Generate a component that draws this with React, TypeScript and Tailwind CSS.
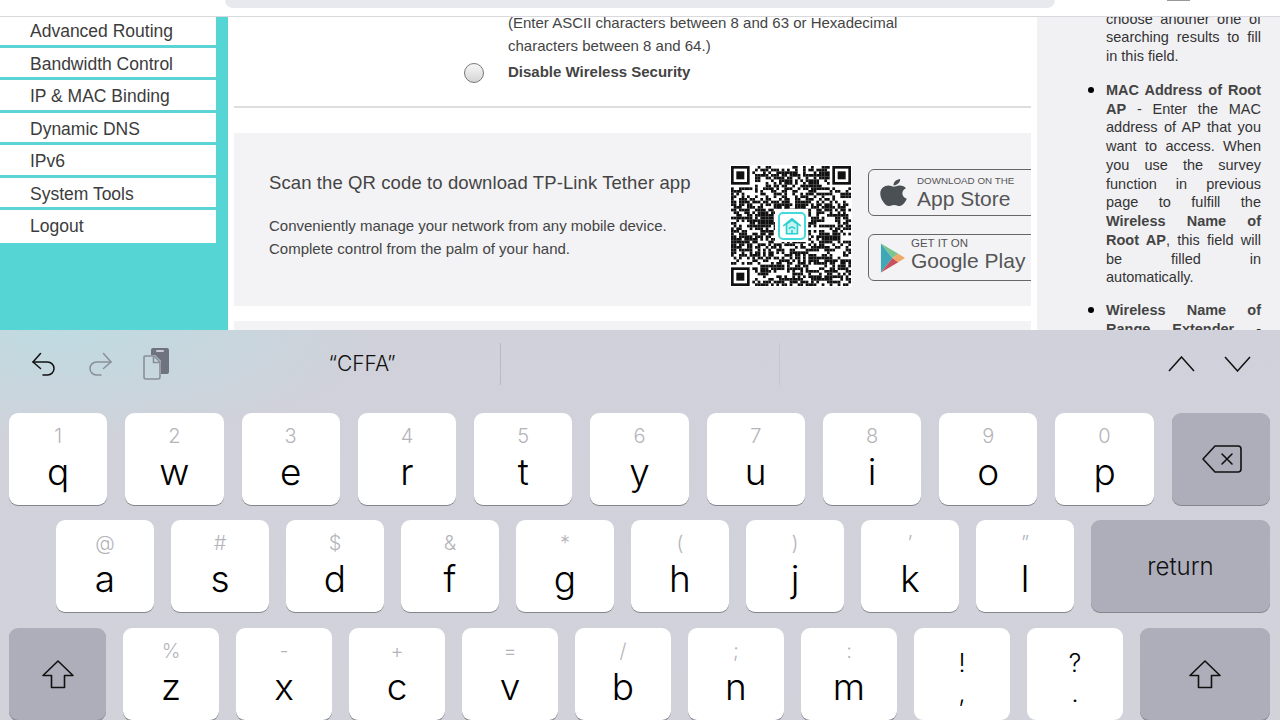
const menuItems = ["Advanced Routing", "Bandwidth Control", "IP & MAC Binding", "Dynamic DNS", "IPv6", "System Tools", "Logout"];

const row1 = [["1", "q"], ["2", "w"], ["3", "e"], ["4", "r"], ["5", "t"], ["6", "y"], ["7", "u"], ["8", "i"], ["9", "o"], ["0", "p"]];
const row2 = [["@", "a"], ["#", "s"], ["$", "d"], ["&", "f"], ["*", "g"], ["(", "h"], [")", "j"], ["’", "k"], ["”", "l"]];
const row3 = [["%", "z"], ["-", "x"], ["+", "c"], ["=", "v"], ["/", "b"], [";", "n"], [":", "m"]];

// pseudo random modules, seeded so the picture stays the same between runs
function qrCells() {
  const size = 45;
  const cells: { x: number; y: number }[] = [];
  let seed = 1337;
  const inFinder = (x: number, y: number) => (x < 8 && y < 8) || (x > size - 9 && y < 8) || (x < 8 && y > size - 9);
  for (let y = 0; y < size; y++) {
    for (let x = 0; x < size; x++) {
      seed = (seed * 1103515245 + 12345) & 0x7fffffff;
      if (!inFinder(x, y) && (seed >> 16) % 100 < 56) cells.push({ x, y });
    }
  }
  return cells;
}

function Finder({ x, y }: { x: number; y: number }) {
  return (
    <g>
      <rect x={x + 0.5} y={y + 0.5} width="6" height="6" fill="none" stroke="#111" strokeWidth="1" />
      <rect x={x + 2} y={y + 2} width="3" height="3" fill="#111" />
    </g>
  );
}

function QrCode() {
  return (
    <div className="relative h-[122px] w-[122px] shrink-0 bg-white p-[1px]">
      <svg viewBox="0 0 45 45" className="h-[120px] w-[120px] blur-[0.4px]">
        {qrCells().map((c) => (
          <rect key={c.x + "-" + c.y} x={c.x} y={c.y} width="1.02" height="1.02" fill="#111" />
        ))}
        <Finder x={0} y={0} />
        <Finder x={38} y={0} />
        <Finder x={0} y={38} />
      </svg>
      <div className="absolute left-[45px] top-[44px] flex h-[33px] w-[33px] items-center justify-center bg-white">
        <div className="flex h-[28px] w-[28px] items-center justify-center rounded-[5px] border-2 border-[#45d9d9] bg-white">
          <svg viewBox="0 0 24 24" className="h-[22px] w-[22px]" fill="#c9f3f3" stroke="#2fd0d0" strokeWidth="1.8" strokeLinejoin="round" strokeLinecap="round">
            <path d="M3 11.500 12 4l9 7.500" fill="none" />
            <path d="M6 10v10.500h12V10l-6-4.500Z" />
            <path d="M9 14.500a4 4 0 0 1 6 0" fill="none" />
            <path d="M12 17v3.500" fill="none" />
          </svg>
        </div>
      </div>
    </div>
  );
}

function PlayLogo() {
  return (
    <svg viewBox="0 0 26 32" className="h-[32px] w-[25px] shrink-0">
      <path d="M1 1 13 16 1 31Z" fill="#3fa7b5" />
      <path d="M1 1 19 11.500 13 16Z" fill="#7cc48f" />
      <path d="M1 31 19 20.500 13 16Z" fill="#c9505f" />
      <path d="M19 11.500 26 16 19 20.500 13 16Z" fill="#f0a868" />
    </svg>
  );
}

function Key({ hint, letter, className }: { hint: string; letter: string; className: string }) {
  return (
    <div className={"flex h-[92px] flex-col items-center rounded-[9px] bg-white pt-[12px] shadow-[0_1px_0_#85868d] " + className}>
      <span className="h-[22px] text-[20px] font-light leading-[22px] text-[#b4b4ba]">{hint}</span>
      <span className="h-[50px] text-[37px] font-light leading-[50px] text-black">{letter}</span>
    </div>
  );
}

function Shift({ className }: { className: string }) {
  return (
    <div className={"flex h-[92px] items-center justify-center rounded-[9px] bg-[#adaeb9] shadow-[0_1px_0_#85868d] " + className}>
      <svg viewBox="0 0 32 29" className="h-[29px] w-[32px]" fill="none" stroke="#111" strokeWidth="1.6" strokeLinejoin="round">
        <path d="M16 1 1 15.500h8.500v12h13v-12H31Z" />
      </svg>
    </div>
  );
}

export default function App() {
  return (
    <div className="h-[720px] w-[1280px] overflow-hidden bg-white font-['Liberation_Sans',sans-serif]">
      <div className="flex h-[330px] flex-col overflow-hidden">
        <div className="relative z-10 flex h-[17px] shrink-0 items-start border-b border-[#d9d9dd] bg-white">
          <div className="w-[225px]" />
          <div className="h-[8px] w-[830px] rounded-b-[16px] bg-[#e8e9ee]" />
          <div className="ml-[112px] h-[1px] w-[23px] bg-[#999]" />
        </div>
        <div className="flex flex-1 overflow-hidden">
          <div className="w-[228px] shrink-0 bg-[#56d5d5]">
            <div className="-mt-[2px] w-[216px] bg-white">
              {menuItems.map((item, i) => (
                <div
                  key={item}
                  className={
                    i === menuItems.length - 1
                      ? "flex h-[32.5px] items-center pl-[30px] text-[17.5px] text-[#3c3c3c]"
                      : "flex h-[32.5px] items-center border-b-[3px] border-[#5cd3d5] pl-[30px] pt-[3px] text-[17.5px] text-[#3c3c3c]"
                  }
                >
                  {item}
                </div>
              ))}
            </div>
          </div>

          <div className="w-[809px] shrink-0 bg-white px-[6px]">
            <div className="-mt-[5px] pl-[274px] text-[15px] leading-[22.5px] text-[#444]">
              <p>(Enter ASCII characters between 8 and 63 or Hexadecimal</p>
              <p>characters between 8 and 64.)</p>
            </div>
            <div className="flex h-[30px] items-center">
              <div className="ml-[230px] mt-[2px] h-[20px] w-[20px] rounded-full border border-[#777] bg-gradient-to-b from-[#f7f7f7] to-[#d5d5d5]" />
              <span className="ml-[24px] text-[15px] font-bold text-[#444]">Disable Wireless Security</span>
            </div>
            <div className="mt-[19px] h-[2px] bg-[#dedede]" />
            <div className="mt-[25px] flex h-[173px] overflow-hidden bg-[#f3f3f5] pl-[35px]">
              <div className="w-[461px] shrink-0 pt-[38px] text-[#444]">
                <p className="whitespace-nowrap text-[18.5px] leading-[24px] tracking-[0.1px]">Scan the QR code to download TP-Link Tether app</p>
                <p className="mt-[19px] text-[15px] leading-[23px]">Conveniently manage your network from any mobile device.</p>
                <p className="text-[15px] leading-[23px]">Complete control from the palm of your hand.</p>
              </div>
              <div className="pt-[32px]">
                <QrCode />
              </div>
              <div className="ml-[16px] flex w-[200px] shrink-0 flex-col gap-[18px] pt-[36px]">
                <div className="flex h-[47px] items-center rounded-[6px] border-[1.5px] border-[#666] pl-[11px] text-[#555]">
                  <svg viewBox="0 0 384 512" preserveAspectRatio="none" className="h-[31px] w-[27px] shrink-0" fill="#4b5054">
                    <path d="M318.700 268.700c-.2-36.700 16.400-64.400 50-84.800-18.800-26.900-47.200-41.700-84.700-44.600-35.500-2.800-74.300 20.700-88.500 20.700-15 0-49.400-19.700-76.400-19.700C63.300 141.200 4 184.800 4 273.500q0 39.300 14.400 81.200c12.800 36.700 59 126.700 107.200 125.200 25.200-.6 43-17.900 75.800-17.900 31.800 0 48.300 17.900 76.400 17.900 48.600-.7 90.400-82.500 102.600-119.300-65.200-30.700-61.700-90-61.700-91.900zm-56.600-164.200c27.300-32.400 24.800-61.900 24-72.500-24.100 1.400-52 16.400-67.900 34.900-17.500 19.800-27.800 44.300-25.600 71.900 26.100 2 49.900-11.400 69.500-34.300z" />
                  </svg>
                  <div className="ml-[10px]">
                    <p className="whitespace-nowrap text-[9.8px] leading-[12px]">DOWNLOAD ON THE</p>
                    <p className="whitespace-nowrap text-[21px] leading-[24px]">App Store</p>
                  </div>
                </div>
                <div className="flex h-[47px] items-center rounded-[6px] border-[1.5px] border-[#666] pl-[11px] text-[#555]">
                  <PlayLogo />
                  <div className="ml-[6px] pb-[5px]">
                    <p className="whitespace-nowrap text-[11.5px] leading-[12px]">GET IT ON</p>
                    <p className="whitespace-nowrap text-[21px] leading-[24px]">Google Play</p>
                  </div>
                </div>
              </div>
            </div>
            <div className="mt-[15px] h-[20px] bg-[#f3f3f5]" />
          </div>

          <div className="flex-1 overflow-hidden bg-[#f1f1f3] pl-[69px] pr-[19px] text-justify text-[14.5px] leading-[18.75px] text-[#333]">
            <p className="-mt-[7.5px]">choose another one of searching results to fill in this field.</p>
            <ul className="mt-[15px]">
              <li className="relative before:absolute before:left-[-18px] before:top-[6px] before:h-[6px] before:w-[6px] before:rounded-full before:bg-black before:content-['']">
                <b className="text-[#444]">MAC Address of Root AP</b> - Enter the MAC address of AP that you want to access. When you use the survey function in previous page to fulfill the <b className="text-[#444]">Wireless Name of Root AP</b>, this field will be filled in automatically.
              </li>
              <li className="relative mt-[14px] before:absolute before:left-[-18px] before:top-[6px] before:h-[6px] before:w-[6px] before:rounded-full before:bg-black before:content-['']">
                <b className="text-[#444]">Wireless Name of Range Extender</b> - Enter the name of this network.
              </li>
            </ul>
          </div>
        </div>
      </div>

      <div className="h-[390px] bg-[radial-gradient(ellipse_320px_110px_at_60px_0px,#bfdbe1,transparent),linear-gradient(#d0d1da,#d1d2da)] font-['Inter',sans-serif]">
        <div className="flex h-[83px] items-center pb-[15px]">
          <div className="ml-[32px] flex w-[138px] items-center">
            <svg viewBox="0 0 24 24" className="h-[24px] w-[24px]" fill="none" stroke="#111" strokeWidth="1.500" strokeLinecap="round" strokeLinejoin="round">
              <path d="M8.500 1.500 1 10l7.500 6.500" />
              <path d="M1 10h14.500a6.500 6.500 0 0 1 0 13H11" />
            </svg>
            <svg viewBox="0 0 24 24" className="ml-[32px] h-[24px] w-[24px]" fill="none" stroke="#8a8e98" strokeWidth="1.500" strokeLinecap="round" strokeLinejoin="round">
              <path d="M15.500 1.500 23 10l-7.500 6.500" />
              <path d="M23 10H8.500a6.500 6.500 0 0 0 0 13H13" />
            </svg>
            <svg viewBox="0 0 26 32" className="ml-[31px] h-[32px] w-[26px] shrink-0">
              <path d="M8 2a2 2 0 0 1 2-2h14a2 2 0 0 1 2 2v22a2 2 0 0 1-2 2H18V13l-6-6H8Z" fill="#6f7380" />
              <rect x="13" y="2" width="8" height="2" rx="1" fill="#c9cbd3" />
              <path d="M2 8h9l6 6v15a2 2 0 0 1-2 2H3a2 2 0 0 1-2-2V9a1 1 0 0 1 1-1Z" fill="none" stroke="#8a8e98" strokeWidth="1.600" />
              <path d="M10.500 8v6.500H17" fill="none" stroke="#8a8e98" strokeWidth="1.600" />
            </svg>
          </div>
          <div className="w-[330px] pl-[54px] text-center text-[21px] font-light text-[#111]">“CFFA”</div>
          <div className="h-[42px] w-px bg-[#b9bac3]" />
          <div className="w-[278px]" />
          <div className="h-[42px] w-px bg-[#c5c6ce]" />
          <div className="ml-[388px] flex gap-[29px]">
            <svg viewBox="0 0 27 16" className="h-[16px] w-[27px]" fill="none" stroke="#111" strokeWidth="1.500">
              <path d="M1 15 13.500 1 26 15" />
            </svg>
            <svg viewBox="0 0 27 16" className="h-[16px] w-[27px]" fill="none" stroke="#111" strokeWidth="1.500">
              <path d="M1 1 13.500 15 26 1" />
            </svg>
          </div>
        </div>

        <div className="flex gap-[18px] pl-[9px] pr-[10px]">
          {row1.map(([hint, letter]) => (
            <Key key={letter} hint={hint} letter={letter} className="flex-1" />
          ))}
          <div className="flex h-[92px] flex-1 items-center justify-center rounded-[9px] bg-[#adaeb9] shadow-[0_1px_0_#85868d]">
            <svg viewBox="0 0 40 28" className="ml-[3px] h-[28px] w-[40px]" fill="none" stroke="#111" strokeWidth="1.600" strokeLinejoin="round" strokeLinecap="round">
              <path d="M13 1h23a3 3 0 0 1 3 3v20a3 3 0 0 1-3 3H13L1 14Z" />
              <path d="m20 9 10 10M30 9 20 19" />
            </svg>
          </div>
        </div>

        <div className="mt-[15px] flex gap-[17px] pl-[56px] pr-[10px]">
          {row2.map(([hint, letter]) => (
            <Key key={letter} hint={hint} letter={letter} className="w-[98px]" />
          ))}
          <div className="flex h-[92px] flex-1 items-center justify-center rounded-[9px] bg-[#adaeb9] pt-[1px] text-[24px] font-light text-[#111] shadow-[0_1px_0_#85868d]">
            return
          </div>
        </div>

        <div className="mt-[16px] flex gap-[17px] pl-[9px] pr-[10px]">
          <Shift className="w-[97px]" />
          {row3.map(([hint, letter]) => (
            <Key key={letter} hint={hint} letter={letter} className="w-[96px]" />
          ))}
          <div className="flex h-[92px] w-[96px] flex-col items-center rounded-[9px] bg-white pt-[20px] text-[25px] font-light leading-[30px] text-black">
            <span>!</span>
            <span>,</span>
          </div>
          <div className="flex h-[92px] w-[96px] flex-col items-center rounded-[9px] bg-white pt-[20px] text-[25px] font-light leading-[30px] text-black">
            <span>?</span>
            <span>.</span>
          </div>
          <Shift className="flex-1" />
        </div>
      </div>
    </div>
  );
}
